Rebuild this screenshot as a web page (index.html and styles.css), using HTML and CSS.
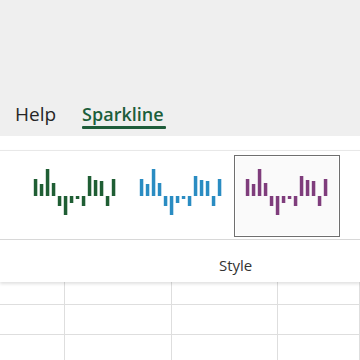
FILE: index.html
```html
<!DOCTYPE html>
<html>
<head>
<meta charset="utf-8">
<title>Sparkline</title>
<link rel="stylesheet" href="styles.css">
</head>
<body>

<div class="tabbar">
  <span class="tab">Help</span>
  <span class="tab on">Sparkline</span>
</div>

<div class="ribbon">
  <div class="gallery">
    <div class="item green">
      <svg width="104" height="80" viewBox="1 1 104 80">
        <rect x="11.8" y="24" width="3.5" height="17"/><rect x="17.8" y="29" width="3.5" height="12"/>
        <rect x="23.8" y="14" width="3.5" height="27"/><rect x="29.8" y="28" width="3.5" height="13"/>
        <rect x="35.8" y="41" width="3.5" height="10"/><rect x="41.8" y="41" width="3.5" height="19"/>
        <rect x="47.8" y="41" width="3.5" height="7"/><rect x="53.8" y="41" width="3.5" height="3"/>
        <rect x="59.8" y="41" width="3.5" height="10"/><rect x="65.8" y="21" width="3.5" height="20"/>
        <rect x="71.8" y="25" width="3.5" height="16"/><rect x="77.8" y="26" width="3.5" height="15"/>
        <rect x="83.8" y="41" width="3.5" height="10"/><rect x="89.8" y="24" width="3.5" height="17"/>
      </svg>
    </div>
    <div class="item blue">
      <svg width="104" height="80" viewBox="1 1 104 80">
        <rect x="11.8" y="24" width="3.5" height="17"/><rect x="17.8" y="29" width="3.5" height="12"/>
        <rect x="23.8" y="14" width="3.5" height="27"/><rect x="29.8" y="28" width="3.5" height="13"/>
        <rect x="35.8" y="41" width="3.5" height="10"/><rect x="41.8" y="41" width="3.5" height="19"/>
        <rect x="47.8" y="41" width="3.5" height="7"/><rect x="53.8" y="41" width="3.5" height="3"/>
        <rect x="59.8" y="41" width="3.5" height="10"/><rect x="65.8" y="21" width="3.5" height="20"/>
        <rect x="71.8" y="25" width="3.5" height="16"/><rect x="77.8" y="26" width="3.5" height="15"/>
        <rect x="83.8" y="41" width="3.5" height="10"/><rect x="89.8" y="24" width="3.5" height="17"/>
      </svg>
    </div>
    <div class="item purple sel">
      <svg width="104" height="80" viewBox="1 1 104 80">
        <rect x="11.8" y="24" width="3.5" height="17"/><rect x="17.8" y="29" width="3.5" height="12"/>
        <rect x="23.8" y="14" width="3.5" height="27"/><rect x="29.8" y="28" width="3.5" height="13"/>
        <rect x="35.8" y="41" width="3.5" height="10"/><rect x="41.8" y="41" width="3.5" height="19"/>
        <rect x="47.8" y="41" width="3.5" height="7"/><rect x="53.8" y="41" width="3.5" height="3"/>
        <rect x="59.8" y="41" width="3.5" height="10"/><rect x="65.8" y="21" width="3.5" height="20"/>
        <rect x="71.8" y="25" width="3.5" height="16"/><rect x="77.8" y="26" width="3.5" height="15"/>
        <rect x="83.8" y="41" width="3.5" height="10"/><rect x="89.8" y="24" width="3.5" height="17"/>
      </svg>
    </div>
  </div>
  <p class="grplabel">Style</p>
</div>

<div class="sheet">
  <div class="row"><i></i><i></i><i></i><i></i></div>
  <div class="row"><i></i><i></i><i></i><i></i></div>
  <div class="row"><i></i><i></i><i></i><i></i></div>
</div>

</body>
</html>
```

FILE: styles.css
```css
html, body { margin:0; padding:0; background:#fff; }
body { width:360px; height:360px; overflow:hidden; font-family:"Open Sans","Noto Sans","DejaVu Sans",sans-serif; }

.tabbar { height:136px; background:#efefef; display:flex; align-items:flex-end; padding-left:15px; box-sizing:border-box; }
.tab { font-size:19px; color:#262626; line-height:26px; padding-bottom:9px; margin-right:26px; }
.tab.on { color:#1b5e3b; font-weight:600; font-size:18px; position:relative; }
.tab.on:after { content:""; position:absolute; left:0; right:-2px; bottom:7px; height:3px; background:#1e5c3a; border-radius:1px; }

.ribbon { background:#fff; box-shadow:0 2px 3px rgba(0,0,0,0.12); position:relative; }
.gallery { height:90px; border-top:1px solid #e8e8e8; border-bottom:1px solid #d8d8d8; margin-top:14px; display:flex; padding:4px 0 0 22px; box-sizing:border-box; }
.item { width:106px; height:82px; border:1px solid transparent; box-sizing:border-box; }
.item svg { display:block; }
.item.sel { border-color:#6f6f6f; box-shadow:inset 0 0 0 1px #fff; background:#fafafa; }
.green rect { fill:#1f5e34; }
.blue rect { fill:#2a8cc2; }
.purple rect { fill:#7f3d7c; }

p.grplabel { margin:0; height:42px; padding-top:10px; line-height:30px; box-sizing:border-box; font-size:15px; color:#333; padding-left:219px; }

.sheet { background:#fff; }
.row { display:grid; grid-template-columns:65px 107px 106px 82px; height:29px; border-bottom:1px solid #dedede; }
.row:first-child { height:22px; }
.row i { border-right:1px solid #dedede; }
```
